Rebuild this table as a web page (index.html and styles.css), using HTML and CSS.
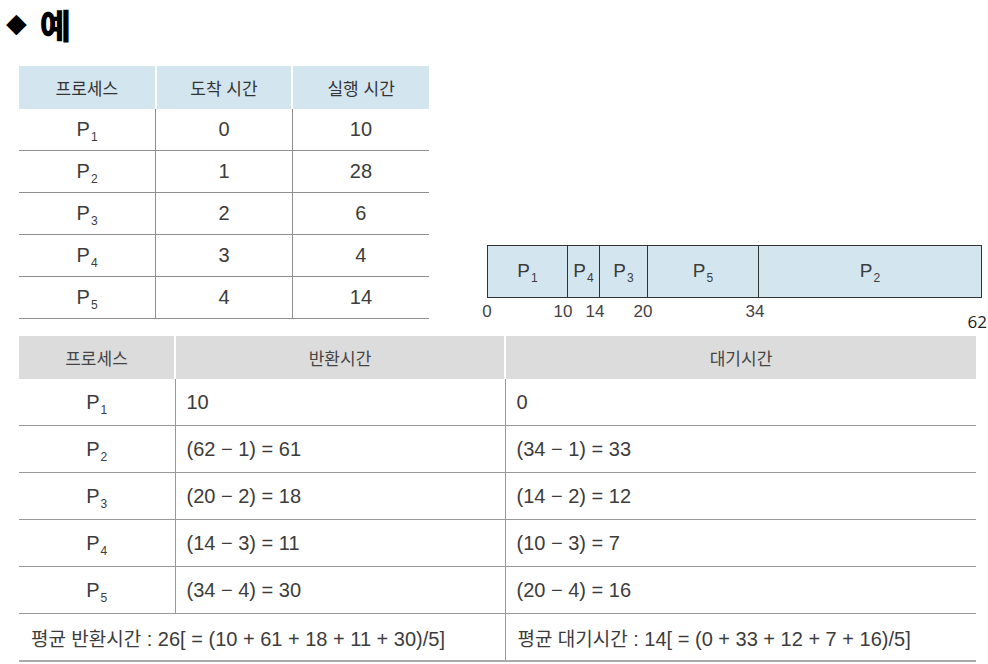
FILE: index.html
```html
<!DOCTYPE html>
<html lang="ko">
<head>
<meta charset="utf-8">
<link rel="stylesheet" href="styles.css">
</head>
<body>
<div class="page">
  <h1 class="title"><span class="diamond">◆</span><span class="title-text">예</span></h1>

  <div class="top">
    <table class="t1">
      <thead>
        <tr><th>프로세스</th><th>도착 시간</th><th>실행 시간</th></tr>
      </thead>
      <tbody>
        <tr><td>P<sub>1</sub></td><td>0</td><td>10</td></tr>
        <tr><td>P<sub>2</sub></td><td>1</td><td>28</td></tr>
        <tr><td>P<sub>3</sub></td><td>2</td><td>6</td></tr>
        <tr><td>P<sub>4</sub></td><td>3</td><td>4</td></tr>
        <tr><td>P<sub>5</sub></td><td>4</td><td>14</td></tr>
      </tbody>
    </table>

    <div class="gantt-wrap">
      <div class="gantt">
        <div class="seg" style="width:80px"><span>P<sub>1</sub></span></div>
        <div class="seg" style="width:32px"><span>P<sub>4</sub></span></div>
        <div class="seg" style="width:48px"><span>P<sub>3</sub></span></div>
        <div class="seg" style="width:111px"><span>P<sub>5</sub></span></div>
        <div class="seg last" style="width:224px"><span>P<sub>2</sub></span></div>
      </div>
      <div class="axis">
        <span class="tick" style="left:0px">0</span>
        <span class="tick" style="left:76px">10</span>
        <span class="tick" style="left:108px">14</span>
        <span class="tick" style="left:156px">20</span>
        <span class="tick" style="left:268px">34</span>
        <span class="tick end">62</span>
      </div>
    </div>
  </div>

  <table class="t2">
    <colgroup><col class="c1"><col class="c2"><col class="c3"></colgroup>
    <thead>
      <tr><th>프로세스</th><th>반환시간</th><th>대기시간</th></tr>
    </thead>
    <tbody>
      <tr><td class="p">P<sub>1</sub></td><td>10</td><td>0</td></tr>
      <tr><td class="p">P<sub>2</sub></td><td>(62 − 1) = 61</td><td>(34 − 1) = 33</td></tr>
      <tr><td class="p">P<sub>3</sub></td><td>(20 − 2) = 18</td><td>(14 − 2) = 12</td></tr>
      <tr><td class="p">P<sub>4</sub></td><td>(14 − 3) = 11</td><td>(10 − 3) = 7</td></tr>
      <tr><td class="p">P<sub>5</sub></td><td>(34 − 4) = 30</td><td>(20 − 4) = 16</td></tr>
      <tr class="foot"><td colspan="2"><span class="ko">평균 반환시간</span> : 26[ = (10 + 61 + 18 + 11 + 30)/5]</td><td><span class="ko">평균 대기시간</span> : 14[ = (0 + 33 + 12 + 7 + 16)/5]</td></tr>
    </tbody>
  </table>
</div>
</body>
</html>
```

FILE: styles.css
```css
html, body {
  margin: 0;
  padding: 0;
  background: #ffffff;
}

.page {
  width: 988px;
  height: 664px;
  overflow: hidden;
  font-family: "Liberation Sans", "Noto Sans CJK KR", sans-serif;
  color: #3c3c3c;
}

.title {
  margin: 0;
  height: 66px;
  display: flex;
  align-items: flex-start;
  padding: 7px 0 0 6px;
  box-sizing: border-box;
}

.diamond {
  font-family: "DejaVu Sans", sans-serif;
  font-size: 27px;
  line-height: 32px;
  color: #000;
  margin-right: 13px;
}

.title-text {
  font-family: "Noto Sans CJK KR", sans-serif;
  font-weight: 900;
  font-size: 34px;
  line-height: 36px;
  color: #000;
}

.top {
  display: flex;
  height: 270px;
  padding-left: 19px;
}

table {
  border-collapse: collapse;
  table-layout: fixed;
}

sub {
  font-size: 12px;
  vertical-align: -5px;
  margin-left: 1px;
  line-height: 0;
}

.t1 {
  width: 410px;
  height: 253px;
  align-self: flex-start;
}

.t1 th {
  font-family: "Noto Sans CJK KR", sans-serif;
  font-weight: 400;
  font-size: 17px;
  color: #333;
  height: 43px;
  padding: 0;
  background: #d3e6f0;
  border-right: 2px solid #fff;
}

.t1 th:last-child { border-right: 0; }

.t1 td {
  height: 41px;
  padding: 0;
  text-align: center;
  font-size: 20px;
  border-bottom: 1px solid #8e8e8e;
  border-right: 1px solid #8e8e8e;
}

.t1 td:last-child { border-right: 0; }

.gantt-wrap {
  margin-left: 58px;
  padding-top: 179px;
  width: 495px;
}

.gantt {
  display: flex;
  height: 53px;
  border: 1.5px solid #333;
  box-sizing: border-box;
  background: #d3e6f0;
}

.seg {
  box-sizing: border-box;
  border-right: 1.5px solid #333;
  display: flex;
  align-items: center;
  justify-content: center;
  font-size: 19px;
  color: #3c3c3c;
  padding-bottom: 2px;
}

.seg.last { border-right: 0; flex: 1; }

.axis {
  position: relative;
  height: 40px;
}

.tick {
  position: absolute;
  top: 4px;
  font-size: 17px;
  color: #444;
  transform: translateX(-50%);
}

.tick.end {
  left: auto;
  right: -5px;
  top: 12px;
  transform: none;
  font-family: "Open Sans", sans-serif;
  color: #222;
  font-size: 17px;
}

.t2 {
  margin-left: 19px;
  width: 957px;
}

.t2 col.c1 { width: 156px; }
.t2 col.c2 { width: 330px; }
.t2 col.c3 { width: 471px; }

.t2 th {
  font-family: "Noto Sans CJK KR", sans-serif;
  font-weight: 400;
  font-size: 17px;
  color: #444;
  height: 43px;
  padding: 0;
  background: #dcdcdc;
  border-right: 2px solid #fff;
}

.t2 th:last-child { border-right: 0; }

.t2 td {
  height: 46px;
  padding: 0 0 0 11px;
  font-size: 20px;
  border-bottom: 1px solid #999;
  border-right: 1px solid #999;
}

.t2 td:last-child { border-right: 0; }

.t2 td.p {
  text-align: center;
  padding-left: 0;
}

.t2 tr.foot td {
  font-size: 20px;
  border-bottom: 2px solid #aaa;
  padding-left: 12px;
}

.ko {
  font-family: "Noto Sans CJK KR", sans-serif;
  font-size: 19px;
}
```
